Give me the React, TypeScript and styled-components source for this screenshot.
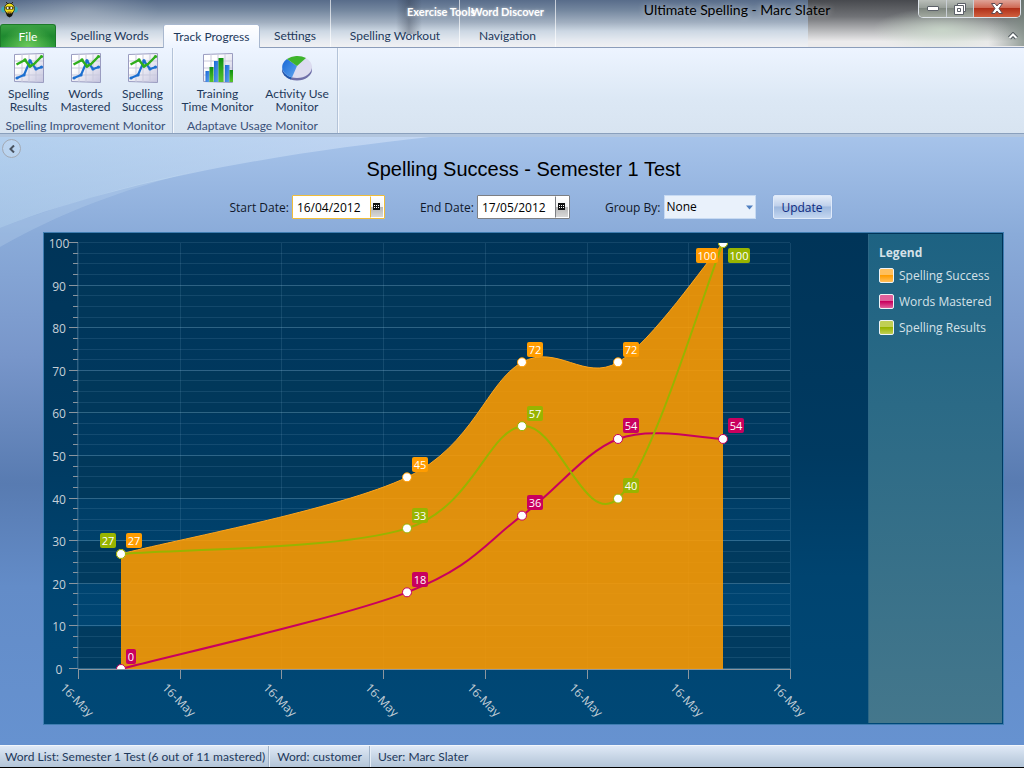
import React, { useState } from "react";
import styled, { createGlobalStyle, css } from "styled-components";

const uiFont = `Lato, "Noto Sans", sans-serif`;
const bodyFont = `"Open Sans", "Noto Sans", sans-serif`;

const GlobalStyle = createGlobalStyle`
  *, *::before, *::after { box-sizing: border-box; }
  body { margin: 0; background: #6791ce; }
  button, input, select { font: inherit; color: inherit; margin: 0; }
`;

const Page = styled.div`
  display: flex;
  flex-direction: column;
  min-height: 100vh;
  font-family: ${uiFont};
  font-size: 12px;
  line-height: 13px;
  color: #1e395b;
  border-bottom: 1px solid #000;
`;

/* ---------- Title bar and tabs ---------- */

const Header = styled.header`
  display: flex;
  height: 48px;
  border-bottom: 1px solid #8b9dba;
  background:
    radial-gradient(ellipse at 50% 30%, rgba(255, 255, 255, 0.2), rgba(255, 255, 255, 0) 70%) 10px 0 / 150px 34px no-repeat,
    linear-gradient(to right, rgba(40, 48, 64, 0), rgba(40, 48, 64, 0.35) 50%, rgba(40, 48, 64, 0)) 396px 0 / 26px 34px no-repeat,
    radial-gradient(ellipse at center, rgba(205, 222, 205, 0.75), rgba(205, 222, 205, 0) 72%) right 14px top 8px / 136px 44px no-repeat,
    linear-gradient(to right, rgba(120, 134, 126, 0), rgba(120, 134, 126, 0.75)) right 0 top 0 / 36px 46px no-repeat,
    linear-gradient(#47494e, #707276 35%, #b7b8ba 65%, #ecebec 88%) right 0 top 0 / 216px 47px no-repeat,
    linear-gradient(#586c8a, #74879f 22%, #a2b0c1 48%, #ccd7e3 66%, #e4e9f0 85%, #f1f1f3);
`;

const MainTabs = styled.div`
  display: flex;
  flex-direction: column;
  width: 330px;
`;

const AppIconRow = styled.div`
  height: 24px;
  padding: 1px 0 0 1px;
`;

const TabStrip = styled.nav`
  display: flex;
  height: 24px;
`;

const tabBase = css`
  border: 0;
  background: none;
  padding: 0;
  text-align: center;
  white-space: nowrap;
`;

const FileTab = styled.button`
  ${tabBase}
  width: 56px;
  padding-top: 2px;
  border: 1px solid #1d7a2a;
  border-bottom: 0;
  border-radius: 3px 3px 0 0;
  color: #fff;
  background: radial-gradient(ellipse at 50% 100%, #6cc95a, rgba(108, 201, 90, 0) 70%), linear-gradient(#3aa043, #1f8a30 50%, #2a9a36);
`;

const Tab = styled.button<{ $width: number; $active?: boolean }>`
  ${tabBase}
  width: ${(p) => p.$width}px;
  ${(p) =>
    p.$active &&
    css`
      margin-bottom: -1px;
      border: 1px solid #a9b8cf;
      border-bottom: 0;
      border-radius: 3px 3px 0 0;
      background: linear-gradient(#fff, #edf4ff);
    `}
`;

const ContextGroup = styled.div<{ $width: number; $last?: boolean }>`
  display: flex;
  flex-direction: column;
  width: ${(p) => p.$width}px;
  border-left: 1px solid rgba(255, 255, 255, 0.65);
  border-right: ${(p) => (p.$last ? 1 : 0)}px solid rgba(255, 255, 255, 0.65);
`;

const ContextTitle = styled.div<{ $indent: number }>`
  height: 24px;
  padding-left: ${(p) => p.$indent}px;
  line-height: 24px;
  font-weight: 700;
  font-size: 11px;
  white-space: nowrap;
  color: #fff;
  text-shadow: 0 0 3px rgba(255, 255, 255, 0.6);
`;

const WindowTitle = styled.div`
  flex: 1;
  min-width: 0;
  font-size: 14px;
  line-height: 20px;
  text-align: center;
  color: #000;
  text-shadow: 0 0 6px rgba(255, 255, 255, 0.6);
`;

const WindowSide = styled.div`
  display: flex;
  flex-direction: column;
  align-items: flex-end;
  justify-content: space-between;
  padding: 0 3px 7px 0;
`;

const WindowButtons = styled.div`
  display: flex;
  border: 1px solid #dde3ea;
  border-top: 0;
  border-radius: 0 0 5px 5px;
  overflow: hidden;
`;

const WindowButton = styled.button<{ $width: number; $close?: boolean }>`
  display: flex;
  align-items: center;
  justify-content: center;
  width: ${(p) => p.$width}px;
  height: 17px;
  padding: 0;
  border: 0;
  border-right: ${(p) => (p.$close ? 0 : 1)}px solid #c8ced4;
  background: ${(p) =>
    p.$close
      ? "linear-gradient(#dfa397, #cf6a55 45%, #b03019 50%, #d0603f)"
      : "linear-gradient(#b9beb9, #989f99 45%, #7f8780 50%, #a3aaa1)"};
`;

const RibbonToggle = styled.button`
  display: flex;
  padding: 0;
  margin-right: 3px;
  border: 0;
  background: none;
`;

/* ---------- Ribbon ---------- */

const Ribbon = styled.section`
  display: flex;
  height: 86px;
  border-bottom: 1px solid #8aa0bd;
  background: linear-gradient(#edf4ff, #dce8f5 60%, #d8e4f1);
`;

const RibbonGroup = styled.div<{ $endGap?: number }>`
  display: flex;
  flex-direction: column;
  padding-right: ${(p) => p.$endGap ?? 0}px;
  border-right: 1px solid #b4c3d8;
  box-shadow: 1px 0 0 #f4f8fd;
`;

const RibbonItems = styled.div`
  display: flex;
`;

const RibbonItem = styled.button<{ $width: number }>`
  display: flex;
  flex-direction: column;
  align-items: center;
  gap: 4px;
  width: ${(p) => p.$width}px;
  height: 71px;
  padding: 5px 0 0;
  border: 0;
  background: none;
  white-space: pre;
`;

const RibbonGroupLabel = styled.div`
  text-align: center;
  color: #3a5179;
  white-space: nowrap;
`;

/* ---------- Main area ---------- */

const Main = styled.main`
  position: relative;
  flex: 1;
  padding: 5px 20px 20px 43px;
  background: linear-gradient(
    #a6c3ea 0,
    #8aabd9 16%,
    #7896ca 36%,
    #587bb1 57%,
    #638cc8 74%,
    #6692d0 100%
  );
  border-top: 3px solid #b3c6de;
`;

const Swoosh = styled.svg`
  position: absolute;
  left: 0;
  top: 0;
  pointer-events: none;
`;

const CollapseButton = styled.button`
  position: absolute;
  left: 2px;
  top: 2px;
  width: 19px;
  height: 19px;
  display: flex;
  align-items: center;
  justify-content: center;
  padding: 0;
  border: 1px solid #a3a9b3;
  border-radius: 50%;
  background: rgba(255, 255, 255, 0.12);
`;

const ChartTitle = styled.h1`
  position: relative;
  margin: 15px 0 14px;
  font: 400 20px/24px "Liberation Sans", Arial, sans-serif;
  text-align: center;
  color: #000;
`;

const Filters = styled.form`
  position: relative;
  display: flex;
  justify-content: center;
  gap: 35px;
  height: 24px;
  margin-bottom: 13px;
  padding-left: 14px;
  font-family: ${bodyFont};
  color: #10182a;
`;

const Field = styled.div`
  display: flex;
  align-items: center;
  gap: 3px;
`;

const FieldLabel = styled.label`
  white-space: nowrap;
`;

const DateBox = styled.div<{ $focused?: boolean }>`
  display: flex;
  width: 93px;
  height: 24px;
  border: 1px solid ${(p) => (p.$focused ? "#f0bd3a" : "#7d7f83")};
  border-radius: 1px;
  background: #fff;
`;

const DateInput = styled.input`
  flex: 1;
  min-width: 0;
  padding: 0 0 0 4px;
  border: 0;
  outline: 0;
  background: none;
  color: #000;
`;

const CalendarButton = styled.button<{ $focused?: boolean }>`
  display: flex;
  justify-content: center;
  width: 14px;
  padding: 6px 0 0;
  border: 1px solid #fff;
  border-left: 1px solid ${(p) => (p.$focused ? "#f0bd3a" : "#7d7f83")};
  background: linear-gradient(#fff, #f2f2f2 50%, #b5b5b5 50%, #d8d8d8);
`;

const SelectBox = styled.div`
  position: relative;
  display: flex;
  width: 92px;
  height: 24px;
`;

const Select = styled.select`
  flex: 1;
  appearance: none;
  padding: 0 18px 2px 2px;
  border: 1px solid #c7daf2;
  border-radius: 0;
  background: #e9f1fb;
  color: #000;
`;

const SelectArrow = styled.svg`
  position: absolute;
  right: 3px;
  top: 10px;
  pointer-events: none;
`;

const FieldWithButton = styled.div`
  display: flex;
  gap: 17px;
`;

const UpdateButton = styled.button`
  width: 59px;
  height: 24px;
  padding: 0;
  border: 1px solid #dfeafa;
  border-radius: 2px;
  background: linear-gradient(#e4edf9, #bfd0ea 45%, #9db8de 50%, #c3d6f0);
  box-shadow: 0 0 1px #6f8fc0;
  color: #0e2a80;
`;

/* ---------- Chart ---------- */

const ChartPanel = styled.section`
  position: relative;
  display: flex;
  padding: 1px;
  border: 1px solid #3f7db1;
  background: linear-gradient(#003458, #003a61 45%, #004470 70%, #004876);
`;

const Plot = styled.svg`
  display: block;
  flex: 1;
  min-width: 0;
  font-family: ${bodyFont};
  font-size: 12px;
`;

const Legend = styled.aside`
  width: 134px;
  padding: 10px 0 0 10px;
  background: linear-gradient(#1d6282, #2b6a86 35%, #44778c);
  border-left: 1px solid #2d6786;
  font-family: ${bodyFont};
  color: #d5e1e8;
`;

const LegendTitle = styled.h2`
  margin: 0;
  font-size: 12px;
  line-height: 18px;
`;

const LegendList = styled.ul`
  margin: 0;
  padding: 0;
  list-style: none;
`;

const LegendItem = styled.li`
  display: flex;
  align-items: center;
  gap: 5px;
  height: 26px;
  white-space: nowrap;
`;

const Swatch = styled.span<{ $light: string; $dark: string }>`
  width: 15px;
  height: 15px;
  border: 1px solid #eef3f6;
  border-radius: 2px;
  background: linear-gradient(${(p) => `${p.$light}, ${p.$light} 45%, ${p.$dark} 50%, ${p.$light}`});
`;

/* ---------- Status bar ---------- */

const StatusBar = styled.footer`
  display: flex;
  height: 22px;
  border-top: 1px solid #f2f6fb;
  background: linear-gradient(#dfe9f6, #c8d6e6 50%, #b3c5d8);
`;

const StatusItem = styled.span`
  padding: 0 3px 0 5px;
  line-height: 21px;
  white-space: nowrap;
  & + & {
    padding: 0 7px 0 8px;
    border-left: 1px solid #9fb2c8;
    box-shadow: inset 1px 0 0 #e6eef7;
  }
`;

/* ---------- Icons ---------- */

const GridFrame = () => (
  <>
    <path d="M0.5 1.5 L29.5 0.5 V29.5 L0.5 28.5 Z" fill="url(#paper)" stroke="#9a9cc0" />
    <path d="M8 1V29M15 1V29M22 1V29M1 8H29M1 15H29M1 22H29" stroke="#c9cadd" fill="none" />
  </>
);

const LineChartIcon = () => (
  <svg width="30" height="30" viewBox="0 0 30 30" aria-hidden="true">
    <GridFrame />
    <path d="M3 25L10 22L16 8L22 16L28 14" fill="none" stroke="#1c6fd0" strokeWidth="2.2" />
    <g fill="#1c6fd0">
      <circle cx="3" cy="25" r="1.6" />
      <circle cx="10" cy="22" r="1.6" />
      <circle cx="16" cy="8" r="1.8" />
      <circle cx="22" cy="16" r="1.6" />
      <circle cx="27.5" cy="14" r="1.6" />
    </g>
    <path d="M2.5 11.5L11 7L16 13.5L20 11L28 3" fill="none" stroke="#2fae1c" strokeWidth="2.4" />
    <g fill="#2fae1c">
      <circle cx="11" cy="7" r="1.7" />
      <circle cx="16" cy="13" r="1.8" />
      <circle cx="27.5" cy="3.5" r="1.6" />
    </g>
  </svg>
);

const bars = [
  { x: 2.5, y: 18, w: 4, blue: true },
  { x: 6.5, y: 14, w: 4, blue: false },
  { x: 11, y: 8, w: 4.5, blue: true },
  { x: 15.5, y: 5, w: 5, blue: false },
  { x: 22, y: 12, w: 4.5, blue: true },
  { x: 26.5, y: 17, w: 3.5, blue: false },
];

const BarChartIcon = () => (
  <svg width="30" height="30" viewBox="0 0 30 30" aria-hidden="true">
    <GridFrame />
    {bars.map((b) => (
      <rect key={b.x} x={b.x} y={b.y} width={b.w} height={29 - b.y} fill={b.blue ? "url(#blueBar)" : "url(#greenBar)"} />
    ))}
  </svg>
);

const PieIcon = () => (
  <svg width="32" height="30" viewBox="0 0 32 30" aria-hidden="true">
    <ellipse cx="16" cy="16.5" rx="15" ry="11" fill="#6f6fa8" />
    <path d="M1 16A15 11 0 0 0 10 26.500L11 23L5 12Z" fill="#2158ad" />
    <ellipse cx="16" cy="14" rx="15" ry="11" fill="#dcdcf0" />
    <path d="M16 13L6 6A15 11 0 0 0 11 24.4Z" fill="url(#blueBar)" />
    <path d="M16 13L6 6A15 11 0 0 1 25 5Z" fill="#3eb52c" />
  </svg>
);

const BeeIcon = () => (
  <svg width="17" height="17" viewBox="0 0 17 17" aria-hidden="true">
    <ellipse cx="2.5" cy="8.5" rx="2.3" ry="3" fill="#3fa7b5" />
    <ellipse cx="14.5" cy="8.5" rx="2.3" ry="3" fill="#3fa7b5" />
    <path d="M4.500 11H12.500L11 15L8.500 16.500L6 15Z" fill="#15150c" />
    <ellipse cx="8.5" cy="7.5" rx="5" ry="5.2" fill="#f2e21c" stroke="#2a2510" strokeWidth="0.8" />
    <rect x="4.5" y="5.5" width="8" height="3" rx="1" fill="#2a2510" />
    <circle cx="6.7" cy="7" r="1.1" fill="#fff" />
    <circle cx="10.3" cy="7" r="1.1" fill="#fff" />
    <path d="M6 10.500H11L10 12H7Z" fill="#a8701c" />
    <path d="M5 1L7 3M12 1L10 3" stroke="#2a2510" />
  </svg>
);

const SharedDefs = () => (
  <svg width="0" height="0" style={{ position: "absolute" }} aria-hidden="true">
    <defs>
      <linearGradient id="paper" x2="1" y2="1">
        <stop offset="0.3" stopColor="#fff" />
        <stop offset="1" stopColor="#c5c4de" />
      </linearGradient>
      <linearGradient id="blueBar" y2="1">
        <stop offset="0" stopColor="#1767d6" />
        <stop offset="1" stopColor="#5fa3ee" />
      </linearGradient>
      <linearGradient id="greenBar" x2="0" y2="1">
        <stop offset="0" stopColor="#0c8f10" />
        <stop offset="1" stopColor="#58c42c" />
      </linearGradient>
    </defs>
  </svg>
);

const CalendarIcon = () => (
  <svg width="8" height="8" viewBox="0 0 8 8" aria-hidden="true">
    <path d="M0 0H7V7H0Z" fill="#111" />
    <path d="M1 2h1v1h-1zM3 2h1v1h-1zM5 2h1v1h-1zM1 4h1v1h-1zM3 4h1v1h-1zM5 4h1v1h-1z" fill="#fff" />
  </svg>
);

/* ---------- Chart data and drawing ---------- */

type Series = { name: string; color: string; light: string; values: number[] };

const series: Series[] = [
  { name: "Spelling Success", color: "#ff9c00", light: "#ffbf5c", values: [27, 45, 72, 72, 100] },
  { name: "Words Mastered", color: "#c9005e", light: "#e0609c", values: [0, 18, 36, 54, 54] },
  { name: "Spelling Results", color: "#98b400", light: "#c0cf55", values: [27, 33, 57, 40, 100] },
];

const plot = { left: 33, right: 745, top: 9, bottom: 435 };
const pointX = [76, 362, 477, 573, 678];
const yOf = (v: number) => plot.bottom - ((plot.bottom - plot.top) * v) / 100;

const spline = (values: number[]) => {
  const pts = values.map((v, i) => [pointX[i], yOf(v)]);
  const at = (i: number) => pts[Math.max(0, Math.min(pts.length - 1, i))];
  let d = `M${pts[0].join(" ")}`;
  for (let i = 0; i < pts.length - 1; i++) {
    const [a, b, c, e] = [at(i - 1), at(i), at(i + 1), at(i + 2)];
    d += ` C${b[0] + (c[0] - a[0]) / 6} ${b[1] + (c[1] - a[1]) / 6} ${c[0] - (e[0] - b[0]) / 6} ${c[1] - (e[1] - b[1]) / 6} ${c[0]} ${c[1]}`;
  }
  return d;
};

const ValueTag = ({ s, i }: { s: Series; i: number }) => {
  const v = s.values[i];
  const w = String(v).length * 6 + 4;
  const leftSide = (s.name === "Spelling Results" && i === 0) || (s.name === "Spelling Success" && i === 4);
  const x = leftSide ? pointX[i] - 5 - w : pointX[i] + 5;
  const y = Math.floor(yOf(v)) + (v === 100 ? 5 : -20);
  return (
    <g>
      <rect x={x} y={y} width={w} height={15} rx={2} fill={s.color} />
      <text x={x + w / 2} y={y + 12} textAnchor="middle" fontSize="11" fill="#fff">{v}</text>
    </g>
  );
};

const Chart = () => {
  const minor = Array.from({ length: 41 }, (_, i) => i * 2.5);
  const major = Array.from({ length: 11 }, (_, i) => i * 10);
  const columns = Array.from({ length: 8 }, (_, i) => Math.round(plot.left + ((plot.right - plot.left) * i) / 7));
  const snap = (v: number) => Math.round(yOf(v)) - 0.5;
  return (
    <Plot viewBox="0 0 823 489" role="img" aria-label="Spelling success chart">
      <defs>
        <clipPath id="plotArea">
          <rect x={plot.left} y={plot.top} width={plot.right - plot.left} height={plot.bottom - plot.top} />
        </clipPath>
      </defs>
      {[0, 20, 40, 60, 80].map((v) => (
        <rect key={v} x={plot.left} y={yOf(v + 10)} width={plot.right - plot.left} height={yOf(v) - yOf(v + 10)} fill="#02385a" opacity="0.75" />
      ))}
      {minor.map((v) => (
        <g key={v}>
          <path d={`M${plot.left} ${snap(v)}H${plot.right}`} stroke="#8fc0dd" strokeOpacity={v % 10 === 0 && v < 100 ? 0.32 : 0.13} />
          <path d={`M${v % 10 === 0 ? 24 : 28} ${snap(v)}H${plot.left}`} stroke="#8d969e" />
        </g>
      ))}
      {columns.map((x) => (
        <path key={x} d={`M${x + 0.5} ${plot.top}V${plot.bottom}`} stroke="#8fc0dd" strokeOpacity="0.14" />
      ))}
      <path d={`M${plot.left - 0.5} ${plot.top}V${plot.bottom}`} stroke="#5d86a3" strokeOpacity="0.5" />

      <g clipPath="url(#plotArea)">
        <path d={`${spline(series[0].values)} V${plot.bottom} H${pointX[0]} Z`} fill="#ff9c00" fillOpacity="0.88" />
        <path d={spline(series[0].values)} fill="none" stroke="#ffa51c" />
        <path d={spline(series[1].values)} fill="none" stroke={series[1].color} strokeWidth="2" />
        <path d={spline(series[2].values)} fill="none" stroke={series[2].color} strokeWidth="2" />
        {series.map((s) =>
          s.values.map((v, i) => <circle key={s.name + i} cx={pointX[i]} cy={yOf(v)} r="4.5" fill="#fff" stroke={s.color} />)
        )}
      </g>
      {series.map((s) => s.values.map((_, i) => <ValueTag key={s.name + i} s={s} i={i} />))}

      <path d={`M${plot.left} 435.5H${plot.right + 1}`} stroke="#8d969e" />
      {major.map((v) => (
        <text key={v} x="14" y={yOf(v) + 5} textAnchor="middle" fill="#c6d0d8">{v}</text>
      ))}
      {columns.map((x) => (
        <g key={x}>
          <path d={`M${x + 0.5} 436V445`} stroke="#8d969e" />
          <text transform={`translate(${x - 4} 469) rotate(45)`} textAnchor="middle" fill="#c6d0d8">16-May</text>
        </g>
      ))}
    </Plot>
  );
};

const DateField = ({ id, label, initial, focused }: { id: string; label: string; initial: string; focused?: boolean }) => {
  const [value, setValue] = useState(initial);
  return (
    <Field>
      <FieldLabel htmlFor={id}>{label}</FieldLabel>
      <DateBox $focused={focused}>
        <DateInput id={id} value={value} onChange={(e) => setValue(e.target.value)} />
        <CalendarButton type="button" aria-label={`Pick ${id} date`} $focused={focused}><CalendarIcon /></CalendarButton>
      </DateBox>
    </Field>
  );
};

export default function App() {
  return (
    <Page>
      <GlobalStyle />
      <SharedDefs />
      <Header>
        <MainTabs>
          <AppIconRow><BeeIcon /></AppIconRow>
          <TabStrip>
            <FileTab>File</FileTab>
            <Tab $width={107}>Spelling Words</Tab>
            <Tab $width={97} $active>Track Progress</Tab>
            <Tab $width={70}>Settings</Tab>
          </TabStrip>
        </MainTabs>
        <ContextGroup $width={129}>
          <ContextTitle $indent={76}>Exercise Tools</ContextTitle>
          <TabStrip><Tab $width={128}>Spelling Workout</Tab></TabStrip>
        </ContextGroup>
        <ContextGroup $width={97} $last>
          <ContextTitle $indent={11}>Word Discover</ContextTitle>
          <TabStrip><Tab $width={95}>Navigation</Tab></TabStrip>
        </ContextGroup>
        <WindowTitle>Ultimate Spelling - Marc Slater</WindowTitle>
        <WindowSide>
          <WindowButtons>
            <WindowButton $width={28} aria-label="Minimize">
              <svg width="12" height="5" viewBox="0 0 12 5"><rect x="0.5" y="0.5" width="11" height="4" rx="0.5" fill="#fff" stroke="#5b6068" /></svg>
            </WindowButton>
            <WindowButton $width={27} aria-label="Restore">
              <svg width="12" height="12" viewBox="0 0 12 12" fill="#fff" stroke="#5b6068">
                <path d="M3.5 0.5H11.5V8.5H3.5Z" />
                <path fillRule="evenodd" d="M0.5 2.5H9.5V11.5H0.5ZM3.5 5.5V8.5H6.5V5.5Z" />
              </svg>
            </WindowButton>
            <WindowButton $width={46} $close aria-label="Close">
              <svg width="12" height="11" viewBox="0 0 12 11">
                <path d="M0.5 0.5H4L6 3L8 0.5H11.5L8 5.5L11.5 10.5H8L6 8L4 10.5H0.5L4 5.5Z" fill="#fff" stroke="#5f4a52" />
              </svg>
            </WindowButton>
          </WindowButtons>
          <RibbonToggle aria-label="Collapse ribbon">
            <svg width="10" height="8" viewBox="0 0 10 8" fill="none">
              <path d="M1.5 6L5 2.5L8.5 6" stroke="#4b5358" strokeWidth="4" />
              <path d="M1.5 6L5 2.5L8.5 6" stroke="#fff" strokeWidth="2" />
            </svg>
          </RibbonToggle>
        </WindowSide>
      </Header>

      <Ribbon>
        <RibbonGroup $endGap={1}>
          <RibbonItems>
            <RibbonItem $width={57}><LineChartIcon />{"Spelling\nResults"}</RibbonItem>
            <RibbonItem $width={57}><LineChartIcon />{"Words\nMastered"}</RibbonItem>
            <RibbonItem $width={57}><LineChartIcon />{"Spelling\nSuccess"}</RibbonItem>
          </RibbonItems>
          <RibbonGroupLabel>Spelling Improvement Monitor</RibbonGroupLabel>
        </RibbonGroup>
        <RibbonGroup $endGap={5}>
          <RibbonItems>
            <RibbonItem $width={89}><BarChartIcon />{"Training\nTime Monitor"}</RibbonItem>
            <RibbonItem $width={70}><PieIcon />{"Activity Use\nMonitor"}</RibbonItem>
          </RibbonItems>
          <RibbonGroupLabel>Adaptave Usage Monitor</RibbonGroupLabel>
        </RibbonGroup>
      </Ribbon>

      <Main>
        <Swoosh width="440" height="115" viewBox="0 0 440 115" aria-hidden="true">
          <defs>
            <linearGradient id="glow" x2="1" y2="0">
              <stop offset="0" stopColor="#c6e2f5" stopOpacity="0.42" />
              <stop offset="1" stopColor="#dce8fb" stopOpacity="0.5" />
            </linearGradient>
          </defs>
          <path d="M0 0H430C300 14 130 40 0 91Z" fill="url(#glow)" />
          <path d="M0 91C60 68 125 49 200 33C120 53 60 76 0 110Z" fill="#cfe3f8" fillOpacity="0.22" />
        </Swoosh>
        <CollapseButton aria-label="Collapse panel">
          <svg width="6" height="8" viewBox="0 0 6 8"><path d="M5 0.5L1.5 4L5 7.5" fill="none" stroke="#4a5360" strokeWidth="2" /></svg>
        </CollapseButton>
        <ChartTitle>Spelling Success - Semester 1 Test</ChartTitle>
        <Filters onSubmit={(e) => e.preventDefault()}>
          <DateField id="start" label="Start Date:" initial="16/04/2012" focused />
          <DateField id="end" label="End Date:" initial="17/05/2012" />
          <FieldWithButton>
            <Field>
              <FieldLabel htmlFor="group">Group By:</FieldLabel>
              <SelectBox>
                <Select id="group" defaultValue="None"><option>None</option></Select>
                <SelectArrow width="7" height="5" viewBox="0 0 7 5"><path d="M0 0.5H7L3.5 4.5Z" fill="#4f7fc0" /></SelectArrow>
              </SelectBox>
            </Field>
            <UpdateButton type="submit">Update</UpdateButton>
          </FieldWithButton>
        </Filters>
        <ChartPanel>
          <Chart />
          <Legend>
            <LegendTitle>Legend</LegendTitle>
            <LegendList>
              {series.map((s) => (
                <LegendItem key={s.name}><Swatch $light={s.light} $dark={s.color} />{s.name}</LegendItem>
              ))}
            </LegendList>
          </Legend>
        </ChartPanel>
      </Main>

      <StatusBar>
        <StatusItem>Word List: Semester 1 Test (6 out of 11 mastered)</StatusItem>
        <StatusItem>Word: customer</StatusItem>
        <StatusItem>User: Marc Slater</StatusItem>
      </StatusBar>
    </Page>
  );
}
